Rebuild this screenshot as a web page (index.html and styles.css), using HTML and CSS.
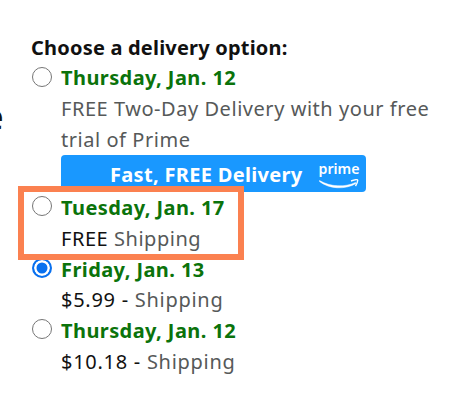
FILE: index.html
```html
<!DOCTYPE html>
<html lang="en">
<head>
<meta charset="utf-8">
<title>Delivery options</title>
<link rel="stylesheet" href="styles.css">
</head>
<body>
<div class="edge" aria-hidden="true">e</div>
<main class="delivery">
  <h1>Choose a delivery option:</h1>
  <section class="option offer">
    <i class="radio"></i>
    <div class="details">
      <p class="date">Thursday, Jan. 12</p>
      <p class="muted">FREE Two-Day Delivery with your free</p>
      <p class="muted">trial of Prime</p>
      <div class="banner"><span class="promo">Fast, FREE Delivery</span><span class="prime">prime<svg viewBox="0 0 40 11"><path class="smile" d="M.5 1.5C11 8 26 8.5 36.5 3.5L37 4.5C26 11 10 10 .5 2.5Z"/><path class="tip" d="M32 2Q39-.5 38.7 1.5Q38.5 4 36.5 7"/></svg></span></div>
    </div>
  </section>
  <section class="option highlighted">
    <i class="radio"></i>
    <div class="details"><p class="date">Tuesday, Jan. 17</p><p class="muted"><span class="price">FREE</span> Shipping</p></div>
  </section>
  <section class="option">
    <i class="radio selected"></i>
    <div class="details"><p class="date">Friday, Jan. 13</p><p class="muted paid"><span class="price">$5.99 -</span> Shipping</p></div>
  </section>
  <section class="option">
    <i class="radio"></i>
    <div class="details"><p class="date">Thursday, Jan. 12</p><p class="muted paid"><span class="price">$10.18 -</span> Shipping</p></div>
  </section>
</main>
</body>
</html>
```
FILE: styles.css
```css
* { box-sizing: border-box; }
body { margin: 0; width: 470px; height: 400px; overflow: hidden; background: #fff; font-family: "Noto Sans", sans-serif; font-size: 20px; line-height: 30px; color: #111; }
.edge { position: absolute; left: -17.5px; top: 91px; font-size: 37px; line-height: 50px; font-weight: 500; }
.delivery { padding: 33px 0 0 31px; }
h1 { margin: 0; font-size: 20px; line-height: 30px; letter-spacing: .2px; white-space: nowrap; }
.option { display: flex; position: relative; }
.radio { width: 20px; height: 20px; margin: 4px 9px 0 1px; border: 1.5px solid #767676; border-radius: 50%; flex: none; }
.selected { border: 2px solid #0870ef; background: #0870ef; box-shadow: inset 0 0 0 2.5px #fff; }
.details { flex: none; margin: 1px 0 -1px; }
.offer .details { margin: 0; }
p { margin: 0; height: 30.8px; white-space: nowrap; }
.offer p { height: 31px; }
.date { color: #0b730b; font-weight: 700; letter-spacing: .42px; }
.muted { color: #565959; letter-spacing: .54px; }
.paid { letter-spacing: .72px; }
.price { color: #111; }
.banner { display: flex; width: 305px; height: 37px; margin-top: -1px; background: #1998ff; color: #fff; border-radius: 4px; padding-left: 49px; }
.promo { flex: none; font-weight: 700; width: 208.5px; line-height: 39px; letter-spacing: .32px; }
.prime { font-weight: 600; font-size: 14.2px; line-height: 28px; }
.prime svg { display: block; width: 40px; height: 11px; margin-top: -4px; }
.smile { fill: #fff; stroke: #fff; stroke-width: .5; }
.tip { fill: none; stroke: #fff; stroke-width: 1.4; }
.highlighted { z-index: 1; }
.highlighted::after { content: ""; box-sizing: border-box; position: absolute; left: -13px; top: -6px; width: 226px; height: 74px; border: 6px solid #fb8150; }
```
